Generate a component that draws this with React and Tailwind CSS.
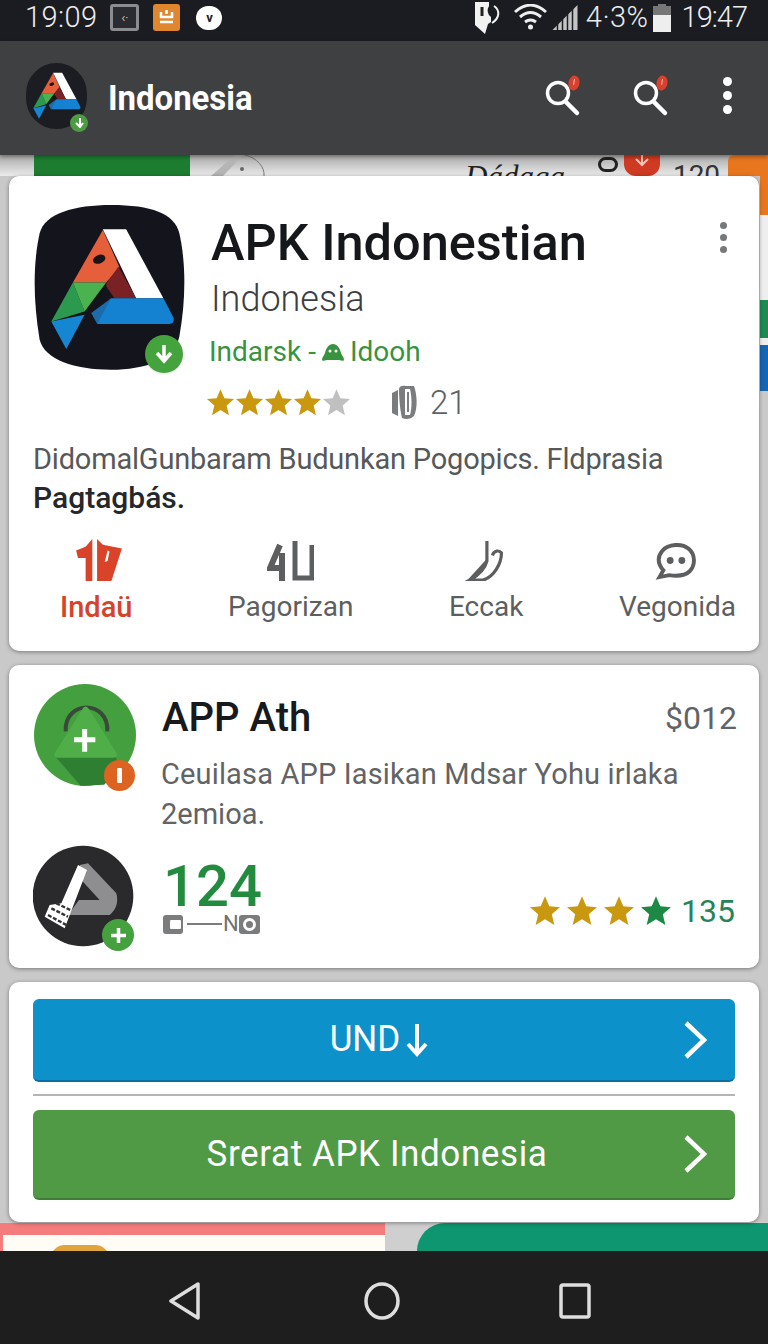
import React from 'react';

const sans = 'font-["Roboto","Liberation_Sans",sans-serif]';

// small star used by both rating rows
function Star({ className, size = 29 }) {
  return (
    <svg width={size} height={size} viewBox="0 0 24 24" className={className}>
      <path fill="currentColor" d="M12 1l3.200 7.500 8 .7-6.100 5.300 1.900 8L12 18.200 5 22.500l1.900-8L.8 9.200l8-.7z" />
    </svg>
  );
}

function SearchBadge() {
  return (
    <svg width="40" height="44" viewBox="0 0 40 44">
      <circle cx="16" cy="20" r="10.500" fill="none" stroke="#fff" strokeWidth="3.500" />
      <path d="M24 29l11 11" stroke="#fff" strokeWidth="4.500" strokeLinecap="round" />
      <ellipse cx="32" cy="10" rx="5.500" ry="7.500" fill="#d8402f" transform="rotate(12 32 10)" />
      <path d="M32.500 6l-1 6" stroke="#f5a99c" strokeWidth="1.200" />
    </svg>
  );
}

// the "A" mark, coordinates taken straight off the big icon
function LogoMark() {
  return (
    <>
      <path fill="#e5603a" d="M305 120L215 278H315L355 232Z" />
      <path fill="#fff" d="M305 118H375L487 325H405Z" />
      <path fill="#7a2126" d="M352 230L405 325H320L315 282Z" />
      <path fill="#14151c" d="M315 290L340 325H295Z" />
      <ellipse cx="294" cy="208" rx="19" ry="13" fill="#1a1416" transform="rotate(-20 294 208)" />
      <path fill="#2b9a4e" d="M215 278L250 365 150 395Z" />
      <path fill="#4cb14f" d="M215 278H315L250 365Z" />
      <path fill="#1587d2" d="M150 395L250 375 195 478Z" />
      <path fill="#1a6cab" d="M330 325L270 370 288 403 330 345Z" />
      <path fill="#1482d1" d="M330 325H487L518 385Q520 403 505 403H288Z" />
    </>
  );
}

function StatusBar() {
  return (
    <div className="h-[41px] bg-[#1b1c21] flex items-center pl-[25px] pr-[21px] pb-[6px] text-[#eceded] text-[29px] leading-none font-light">
      <span className="tracking-[0.4px]">19:09</span>
      <div className="ml-[13px] w-[29px] h-[27px] rounded-[3px] border-[3px] border-[#8b8c90] bg-[#2b2c31] flex items-center justify-center text-[13px]">‹·</div>
      <div className="ml-[14px] w-[27px] h-[27px] rounded-[3px] bg-[#e0862f] flex items-center justify-center">
        <svg width="17" height="17" viewBox="0 0 17 17"><path d="M3 3v5h11V3M8.500 1v4M2 13h13" stroke="#fff" strokeWidth="2.500" fill="none" /></svg>
      </div>
      <div className="ml-[16px] w-[26px] h-[24px] rounded-full bg-white flex items-center justify-center text-[#222] text-[13px] font-bold">v</div>
      <div className="ml-auto flex items-center">
        <svg width="27" height="33" viewBox="0 0 27 33">
          <path fill="#f2f2f2" d="M1 1h14v4a8 8 0 0 0 2 11v5l-3 2-3 10-10-9z" />
          <path stroke="#f2f2f2" strokeWidth="2" fill="none" d="M20 5c6 4 6 12-2 17" />
          <path stroke="#222" strokeWidth="3" d="M8 6v9" />
        </svg>
        <svg className="ml-[13px]" width="33" height="27" viewBox="0 0 33 27" fill="none" stroke="#eee" strokeWidth="3">
          <path d="M1 8c10-9 21-9 31 0M6 13c7-6 14-6 21 0M11 18c4-3 7-3 11 0" />
          <circle cx="16.500" cy="23" r="2.500" fill="#eee" stroke="none" />
        </svg>
        <svg className="ml-[4px]" width="27" height="25" viewBox="0 0 26 25">
          <path fill="#c4c4c4" d="M1 25L26 0V25Z" />
          <path stroke="#1b1c21" strokeWidth="1.500" d="M6 25V18M11 25V13M16 25V8M21 25V3" />
        </svg>
        <span className="ml-[8px] tracking-[0.5px]">4·3%</span>
        <div className="ml-[4px] w-[18px] h-[28px] flex flex-col items-center">
          <div className="w-[8px] h-[2px] bg-[#777]" />
          <div className="w-[18px] h-[9px] bg-[#777]" />
          <div className="w-[18px] h-[17px] bg-[#eee]" />
        </div>
        <span className="ml-[11px] -tracking-[1px]">19:47</span>
      </div>
    </div>
  );
}

function AppBar() {
  return (
    <div className="h-[114px] bg-[#3f4042] flex items-center pl-[26px] pr-[36px] relative z-10 shadow-[0_2px_4px_rgba(0,0,0,0.35)]">
      <div className="relative w-[61px] h-[66px] -mt-[5px] rounded-full bg-[#1c1d22] flex items-center justify-center">
        <svg width="50" height="50" viewBox="140 110 390 380"><LogoMark /></svg>
        <div className="absolute -right-[1px] bottom-[-3px] w-[18px] h-[18px] rounded-full bg-[#4d9c44] flex items-center justify-center">
          <svg width="11" height="11" viewBox="0 0 11 11" fill="none" stroke="#fff" strokeWidth="2"><path d="M6 1v8M2 6l4 4 3-4" /></svg>
        </div>
      </div>
      <h1 className="ml-[21px] text-white text-[35px] leading-none font-bold scale-x-[0.94] origin-left">Indonesia</h1>
      <div className="ml-auto flex items-center -mt-[6px]">
        <SearchBadge />
        <div className="ml-[48px]"><SearchBadge /></div>
        <div className="ml-[53px] flex flex-col gap-[5px]">
          <span className="w-[9px] h-[9px] rounded-full bg-white" />
          <span className="w-[9px] h-[9px] rounded-full bg-white" />
          <span className="w-[9px] h-[9px] rounded-full bg-white" />
        </div>
      </div>
    </div>
  );
}

// the list that scrolled away behind the first card
function TopPeek() {
  return (
    <div className="h-[21px] overflow-hidden bg-gradient-to-b from-[#a9a9a9] to-[#ececec] flex items-start">
      <div className="ml-[34px] w-[156px] h-[21px] bg-[#1c7d30]" />
      <svg className="ml-[21px] shrink-0" width="55" height="21" viewBox="0 0 55 21" fill="none">
        <path fill="#b5b5b5" d="M0 21L24 0H32L12 21Z" />
        <path stroke="#777" d="M34 0c12 3 20 12 19 21" />
        <circle cx="31" cy="14" r="2" fill="#666" />
      </svg>
      <span className="ml-[199px] mt-[6px] text-[31px] leading-none italic text-[#222] font-['Liberation_Serif']">Dádaga</span>
      <span className="ml-[33px] w-[20px] h-[15px] rounded-full border-[3px] border-[#222] mt-[2px] shrink-0" />
      <div className="ml-[6px] w-[36px] h-[21px] bg-[#cf3a22] rounded-b-[12px] flex justify-center shrink-0">
        <svg width="14" height="12" viewBox="0 0 14 12" fill="none" stroke="#f4c4b8" strokeWidth="2"><path d="M7 0v10M1 4l6 6 6-6" /></svg>
      </div>
      <span className="ml-[13px] mt-[7px] text-[28px] leading-none text-[#333]">120</span>
      <div className="ml-auto w-[40px] h-[21px] bg-[#e8761e] rounded-tl-[6px] shrink-0" />
    </div>
  );
}

function ActionItem({ icon, label, color = 'text-[#5d5e60]', labelClass = 'text-[28px]' }) {
  return (
    <div className={`flex flex-col items-center ${color}`}>
      <div className="h-[42px] flex items-end justify-center">{icon}</div>
      <span className={`mt-[9px] leading-[34px] ${labelClass}`}>{label}</span>
    </div>
  );
}

function MainCard() {
  return (
    <section className="mx-[9px] h-[475px] rounded-[10px] bg-white shadow-[0_1px_4px_rgba(0,0,0,0.4)] relative z-[1] pt-[29px] px-[24px]">
      <div className="flex">
        <div className="relative w-[153px] h-[165px] shrink-0">
          <svg width="153" height="165" viewBox="95 45 460 496">
            <path fill="#13141c" d="M330 45C450 45 520 70 535 130C555 220 555 330 535 440C520 510 430 540 330 540C220 540 130 510 115 450C95 330 95 220 115 130C130 70 220 45 330 45Z" />
            <LogoMark />
          </svg>
          <div className="absolute right-[3px] bottom-[-3px] w-[38px] h-[38px] rounded-full bg-[#44a33c] flex items-center justify-center shadow-sm">
            <svg width="22" height="22" viewBox="0 0 22 22" fill="none" stroke="#fff" strokeWidth="3.500"><path d="M11 2v15M4 10l7 8 7-8" /></svg>
          </div>
        </div>
        <div className="ml-[25px] flex-1">
          <h2 className="text-[50.500px] leading-[56px] mt-[10px] font-medium text-[#16171a] whitespace-nowrap">APK Indonestian</h2>
          <p className="mt-[7px] text-[36px] leading-[42px] text-[#3d3e40] font-light">Indonesia</p>
          <p className="mt-[15px] -ml-[2px] text-[28px] leading-[34px] text-[#38933f] flex items-center">
            Indarsk - <svg className="mx-[5px]" width="24" height="20" viewBox="0 0 24 20"><path fill="#38933f" d="M1 18c0-3 2-4 3-7 1-5 4-9 8-9s7 4 8 9c1 3 3 4 3 7 0 1-2 1-5 0H6c-3 1-5 1-5 0z" /><circle cx="9" cy="9" r="1.500" fill="#fff" /><circle cx="15" cy="9" r="1.500" fill="#fff" /></svg>Idooh
          </p>
          <div className="mt-[16px] -ml-[5px] flex items-center">
            {[0, 1, 2, 3].map((i) => <Star key={i} className="text-[#c9980f]" />)}
            <Star className="text-[#c0c0c0]" />
            <svg className="ml-[40px]" width="27" height="35" viewBox="0 0 27 35">
              <path fill="#7b7c7e" d="M1 8l6-3v26l-6-3zM8 4c0-3 4-4 7-3l8 0c3 8 4 22 0 30-3 3-8 4-12 2-2-8-3-20-3-29z" />
              <path fill="#fff" d="M14 4h5c2 8 2 20 0 26h-5z" />
              <path fill="#7b7c7e" d="M16 7h2v20h-2z" />
            </svg>
            <span className="ml-[12px] text-[33px] leading-none text-[#616264] font-light">21</span>
          </div>
        </div>
        <div className="absolute right-[32px] top-[46px] flex flex-col gap-[5px]">
          <span className="w-[7px] h-[7px] rounded-full bg-[#77787a]" />
          <span className="w-[7px] h-[7px] rounded-full bg-[#77787a]" />
          <span className="w-[7px] h-[7px] rounded-full bg-[#77787a]" />
        </div>
      </div>
      <p className="mt-[19px] text-[29px] leading-[40px] text-[#575859] whitespace-nowrap -tracking-[0.2px]">DidomalGunbaram Budunkan Pogopics. Fldprasia</p>
      <p className="text-[30px] leading-[38px] font-medium text-[#26272a]">Pagtagbás.</p>
      <div className="mt-[22px] pl-[27px] -mr-[1px] flex justify-between">
        <ActionItem
          color="text-[#d5432a]"
          labelClass="text-[29px] font-medium"
          label="Indaü"
          icon={
            <svg className="ml-[6px]" width="48" height="42" viewBox="0 0 48 44">
              <path fill="#d9432a" d="M0 12l10-4 7-8v44h-7V20H2zM22 0l6 6 20 4-11 34H22zM33 12l-3 12 3-1 2-10z" />
            </svg>
          }
        />
        <ActionItem
          label="Pagorizan"
          icon={
            <svg width="47" height="40" viewBox="0 0 47 40" fill="none" stroke="#5d5e60" strokeWidth="5">
              <path d="M13 4L3 27h15M15 12v28" strokeWidth="6" />
              <path d="M28 0v37h17V4" />
            </svg>
          }
        />
        <ActionItem
          label="Eccak"
          icon={
            <svg className="ml-[-1px]" width="42" height="40" viewBox="0 0 42 44" fill="none" stroke="#5d5e60" strokeWidth="3.500">
              <path d="M22 0v22c-2 8-10 16-19 21h15c12-4 20-18 20-30-3-3-8-3-10 3" />
              <path d="M3 43L22 22" />
            </svg>
          }
        />
        <ActionItem
          label="Vegonida"
          icon={
            <svg width="44" height="39" viewBox="0 0 44 40">
              <path fill="none" stroke="#5d5e60" strokeWidth="4" d="M4 36l4-7C2 22 2 15 7 9c6-7 20-8 27-2 7 6 7 17 1 23-5 5-14 5-21 4z" />
              <circle cx="15" cy="19" r="3.500" fill="#5d5e60" />
              <circle cx="27" cy="19" r="3.500" fill="#5d5e60" />
            </svg>
          }
        />
      </div>
    </section>
  );
}

function InfoCard() {
  return (
    <section className="mx-[9px] mt-[14px] h-[303px] rounded-[10px] bg-white shadow-[0_1px_4px_rgba(0,0,0,0.4)] relative z-[1] px-[24px] pt-[18px]">
      <div className="flex">
        <div className="relative w-[102px] h-[104px] shrink-0 ml-[1px]">
          <svg width="102" height="104" viewBox="100 40 306 312">
            <circle cx="253" cy="196" r="153" fill="#44a03f" />
            <path fill="#2f7f33" d="M165 262H345L360 300 310 345 240 348Z" />
            <path d="M195 185c-5-95 130-95 125 0" fill="none" stroke="#3a4a3a" strokeWidth="12" />
            <path fill="#4fae48" stroke="#4fae48" strokeWidth="18" strokeLinejoin="round" d="M255 120L340 255H170Z" />
            <path stroke="#fff" strokeWidth="15" d="M252 178v68M220 210h64" />
          </svg>
          <div className="absolute right-[1px] bottom-[-4px] w-[31px] h-[31px] rounded-full bg-[#dc6320] flex items-center justify-center">
            <span className="w-[5px] h-[15px] bg-white rounded-[1px]" />
          </div>
        </div>
        <div className="ml-[26px] flex-1">
          <div className="flex items-center justify-between mt-[13px]">
            <h3 className="text-[40px] leading-[44px] font-medium text-[#18191c]">APP Ath</h3>
            <span className="text-[32px] leading-none text-[#626365] -mr-[2px]">$012</span>
          </div>
          <p className="mt-[15px] text-[29px] leading-[38px] text-[#626365] -ml-[1px] tracking-[0.15px] whitespace-nowrap">Ceuilasa APP Iasikan Mdsar Yohu irlaka</p>
          <p className="text-[29px] leading-[42px] text-[#626365] -ml-[1px]">2emioa.</p>
        </div>
      </div>
      <div className="mt-[10px] flex items-start">
        <div className="relative w-[101px] h-[102px] shrink-0">
          <svg width="101" height="102" viewBox="100 525 303 306">
            <circle cx="250" cy="678" r="151" fill="#2a2a2c" />
            <path fill="#8e8e90" d="M240 585L265 580 350 670Q360 710 330 735H205L238 690H300L245 630Z" />
            <path fill="#fff" d="M235 585L262 600 195 775 135 740 150 705 185 700Z" />
            <path stroke="#333" strokeWidth="7" strokeDasharray="12 5" d="M145 735L200 765M155 715L205 740M170 700L212 720" />
          </svg>
          <div className="absolute right-[0px] bottom-[-4px] w-[32px] h-[32px] rounded-full bg-[#45a03e] flex items-center justify-center">
            <svg width="17" height="17" viewBox="0 0 17 17"><path stroke="#fff" strokeWidth="3.500" d="M8.500 1v15M1 8.500h15" /></svg>
          </div>
        </div>
        <div className="ml-[29px] mt-[15px]">
          <div className="text-[58px] leading-[52px] font-medium text-[#238b3e]">124</div>
          <div className="mt-[1px] flex items-center text-[#707173] text-[22px] leading-none">
            <span className="w-[20px] h-[19px] rounded-[3px] bg-[#7b7c7e] flex items-center justify-start pl-[7px]"><span className="w-[11px] h-[9px] bg-white rounded-[1px]" /></span>
            <span className="ml-[4px] w-[35px] h-[2px] bg-[#7b7c7e]" />
            <span className="ml-[1px]">N</span>
            <span className="w-[21px] h-[19px] rounded-[3px] bg-[#7b7c7e] flex items-center justify-center"><span className="w-[13px] h-[13px] rounded-full border-[3px] border-white" /></span>
          </div>
        </div>
        <div className="ml-auto mt-[50px] flex items-center">
          <Star className="text-[#c9980f] mr-[5px]" size={32} />
          <Star className="text-[#c9980f] mr-[5px]" size={32} />
          <Star className="text-[#c9980f] mr-[5px]" size={32} />
          <Star className="text-[#1c8a45]" size={32} />
          <span className="ml-[9px] text-[32px] leading-none text-[#26835a]">135</span>
        </div>
      </div>
    </section>
  );
}

function ActionButton({ className, children }) {
  return (
    <button className={`w-full rounded-[6px] relative flex items-center justify-center text-white ${className}`}>
      {children}
      <svg className="absolute right-[28px] top-1/2 -translate-y-1/2" width="24" height="38" viewBox="0 0 24 38" fill="none" stroke="#fff" strokeWidth="4.500">
        <path d="M3 2l18 17L3 36" />
      </svg>
    </button>
  );
}

function ButtonCard() {
  return (
    <section className="mx-[9px] mt-[14px] h-[240px] rounded-[10px] bg-white shadow-[0_1px_4px_rgba(0,0,0,0.4)] relative z-[1] px-[24px] pt-[17px]">
      <ActionButton className="h-[83px] bg-[#0d91cb] border-b-2 border-[#0a6ea3]">
        <span className="text-[35px] -ml-[10px] scale-y-[1.08]">UND</span>
        <svg className="ml-[6px]" width="22" height="34" viewBox="0 0 22 34" fill="none" stroke="#fff" strokeWidth="4"><path d="M11 1v29M2 21l9 10 9-10" /></svg>
      </ActionButton>
      <div className="mt-[12px] h-[2px] bg-[#b5b5b5]" />
      <div className="mt-[14px]">
        <ActionButton className="h-[90px] bg-[#509945] border-b-2 border-[#3f7f35]">
          <span className="text-[35px] tracking-[0.6px] -ml-[14px] scale-y-[1.08]">Srerat APK Indonesia</span>
        </ActionButton>
      </div>
    </section>
  );
}

function BottomPeek() {
  return (
    <div className="h-[29px] bg-[#cfcfcf] flex items-end overflow-hidden">
      <div className="w-[385px] h-[28px] bg-[#f47c7c] pt-[12px] pl-[3px] shrink-0">
        <div className="h-[16px] bg-[#fffcf5] overflow-hidden pl-[47px] pt-[10px]">
          <div className="w-[60px] h-[30px] rounded-full bg-[#dfa53c]" />
        </div>
      </div>
      <div className="ml-[32px] flex-1 h-[28px] bg-[#0d966f] rounded-tl-[36px]" />
    </div>
  );
}

function NavBar() {
  return (
    <div className="h-[93px] bg-[#1f1e1f] flex items-start justify-center pt-[31px] pr-[8px]">
      <svg width="34" height="38" viewBox="0 0 34 38" fill="none" stroke="#dedede" strokeWidth="3.500" strokeLinejoin="round"><path d="M30 2v34L3 19z" /></svg>
      <svg className="ml-[162px]" width="36" height="38" viewBox="0 0 36 38" fill="none" stroke="#dedede" strokeWidth="3.500"><ellipse cx="18" cy="19" rx="16" ry="17" /></svg>
      <svg className="ml-[158px]" width="34" height="38" viewBox="0 0 34 38" fill="none" stroke="#dedede" strokeWidth="3.500" strokeLinejoin="round"><rect x="3" y="3" width="28" height="32" rx="2" /></svg>
    </div>
  );
}

export default function App() {
  return (
    <div className={`w-[768px] h-[1344px] overflow-hidden bg-[#c9c9c9] flex flex-col relative ${sans}`}>
      {/* bits of the list behind the cards, showing at the right edge */}
      <div className="absolute right-0 top-[155px] w-[8px] h-[60px] bg-[#e8761e]" />
      <div className="absolute right-0 top-[215px] w-[8px] h-[85px] bg-[#eeeeee]" />
      <div className="absolute right-0 top-[300px] w-[8px] h-[38px] bg-[#1c8a52]" />
      <div className="absolute right-0 top-[338px] w-[8px] h-[7px] bg-[#eeeeee]" />
      <div className="absolute right-0 top-[345px] w-[8px] h-[46px] bg-[#1565b5]" />
      <StatusBar />
      <AppBar />
      <TopPeek />
      <MainCard />
      <InfoCard />
      <ButtonCard />
      <BottomPeek />
      <NavBar />
    </div>
  );
}
